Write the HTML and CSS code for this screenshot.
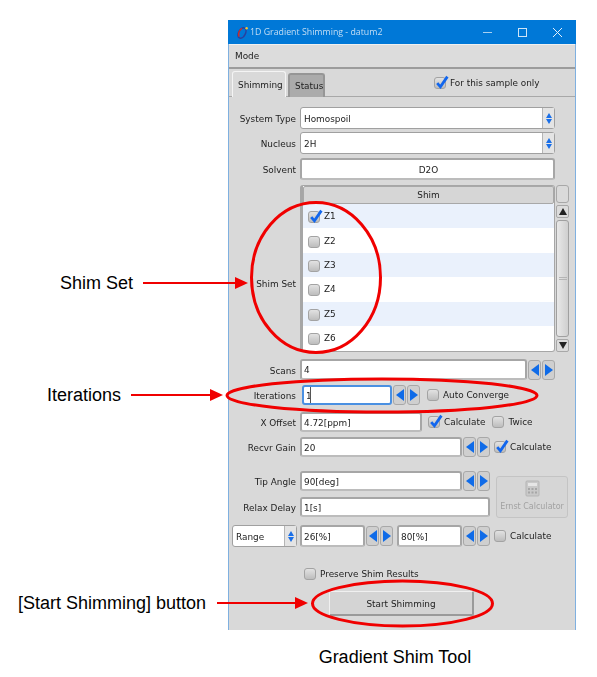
FILE: index.html
```html
<!DOCTYPE html>
<html lang="en">
<head>
<meta charset="UTF-8">
<title>Gradient Shim Tool</title>
<link rel="stylesheet" href="styles.css">
</head>
<body>
<div id="page">
  <div id="window">
    <div class="titlebar">
      <svg class="app-icon" width="13" height="13" viewBox="0 0 13 13">
        <ellipse cx="6" cy="7" rx="3.4" ry="5.6" transform="rotate(28 6 7)" fill="none" stroke="#2a3f9e" stroke-width="1.5"/>
        <path d="M3.2 10.6 C1.8 8 3 4 6 2.4" fill="none" stroke="#c9302c" stroke-width="1.5"/>
        <circle cx="10.6" cy="2.2" r="1.2" fill="#f4c430"/>
      </svg>
      <span class="title-text">1D Gradient Shimming - datum2</span>
      <div class="win-controls">
        <svg width="11" height="11" viewBox="0 0 11 11"><path d="M1 5.5H10" stroke="#a9d0f0" stroke-width="1"/></svg>
        <svg width="11" height="11" viewBox="0 0 11 11"><rect x="1.5" y="1.5" width="8" height="8" fill="none" stroke="#cfe4f6" stroke-width="1"/></svg>
        <svg width="11" height="11" viewBox="0 0 11 11"><path d="M1 1L10 10M10 1L1 10" stroke="#e4f0fa" stroke-width="1"/></svg>
      </div>
    </div>
    <div class="menubar">Mode</div>

    <div class="tabstrip">
      <div class="tab active">Shimming</div>
      <div class="tab">Status</div>
      <label class="check sample-only">
        <span class="box"><svg viewBox="0 0 14 14"><path d="M3 7.5L6 11L12.5 1.5" fill="none" stroke="#1166ee" stroke-width="2.6"/></svg></span>
        For this sample only
      </label>
    </div>

    <div class="form">
      <div class="row row-system">
        <span class="lbl">System Type</span>
        <div class="field select w-full"><span class="val">Homospoil</span><span class="updown"><i class="up"></i><i class="down"></i></span></div>
      </div>
      <div class="row row-nucleus">
        <span class="lbl">Nucleus</span>
        <div class="field select w-full"><span class="val">2H</span><span class="updown"><i class="up"></i><i class="down"></i></span></div>
      </div>
      <div class="row row-solvent">
        <span class="lbl">Solvent</span>
        <div class="field w-full center"><span class="val">D2O</span></div>
      </div>

      <div class="row row-shim">
        <span class="lbl lbl-shim">Shim Set</span>
        <div class="shim-table">
          <div class="shim-list">
            <div class="shim-head">Shim</div>
            <div class="shim-row odd"><span class="box"><svg viewBox="0 0 14 14"><path d="M3 7.5L6 11L12.5 1.5" fill="none" stroke="#1166ee" stroke-width="2.6"/></svg></span>Z1</div>
            <div class="shim-row"><span class="box"></span>Z2</div>
            <div class="shim-row odd"><span class="box"></span>Z3</div>
            <div class="shim-row"><span class="box"></span>Z4</div>
            <div class="shim-row odd"><span class="box"></span>Z5</div>
            <div class="shim-row"><span class="box"></span>Z6</div>
          </div>
          <div class="scrollbar">
            <div class="corner"></div>
            <div class="sb-btn"><i class="tri-up"></i></div>
            <div class="sb-thumb"><span class="grip"></span></div>
            <div class="sb-btn"><i class="tri-down"></i></div>
          </div>
        </div>
      </div>

      <div class="row row-scans">
        <span class="lbl">Scans</span>
        <div class="field w-scans"><span class="val">4</span></div>
        <div class="spin"><span class="spin-btn"><i class="left"></i></span><span class="spin-btn"><i class="right"></i></span></div>
      </div>
      <div class="row row-iter">
        <span class="lbl">Iterations</span>
        <div class="field focused w-iter"><span class="val">1</span><span class="ibeam"></span></div>
        <div class="spin"><span class="spin-btn"><i class="left"></i></span><span class="spin-btn"><i class="right"></i></span></div>
        <label class="check ml-7"><span class="box"></span>Auto Converge</label>
      </div>
      <div class="row row-xoff">
        <span class="lbl">X Offset</span>
        <div class="field w-xoff"><span class="val">4.72[ppm]</span></div>
        <label class="check ml-6"><span class="box"><svg viewBox="0 0 14 14"><path d="M3 7.5L6 11L12.5 1.5" fill="none" stroke="#1166ee" stroke-width="2.6"/></svg></span>Calculate</label>
        <label class="check ml-7"><span class="box"></span>Twice</label>
      </div>
      <div class="row row-gain">
        <span class="lbl">Recvr Gain</span>
        <div class="field w-mid"><span class="val">20</span></div>
        <div class="spin"><span class="spin-btn"><i class="left"></i></span><span class="spin-btn"><i class="right"></i></span></div>
        <label class="check ml-4"><span class="box"><svg viewBox="0 0 14 14"><path d="M3 7.5L6 11L12.5 1.5" fill="none" stroke="#1166ee" stroke-width="2.6"/></svg></span>Calculate</label>
      </div>

      <div class="tip-block">
        <div class="tip-rows">
          <div class="row">
            <span class="lbl">Tip Angle</span>
            <div class="field w-mid"><span class="val">90[deg]</span></div>
            <div class="spin"><span class="spin-btn"><i class="left"></i></span><span class="spin-btn"><i class="right"></i></span></div>
          </div>
          <div class="row row-relax">
            <span class="lbl">Relax Delay</span>
            <div class="field w-relax"><span class="val">1[s]</span></div>
          </div>
        </div>
        <div class="ernst">
          <svg width="15" height="17" viewBox="0 0 15 17">
            <rect x="1" y="1" width="13" height="15" rx="1" fill="#c9c9c9" stroke="#b5b5b5"/>
            <rect x="3" y="3" width="9" height="3" fill="#e6e6e6"/>
            <path d="M3 8h2v2H3zM6.5 8h2v2h-2zM10 8h2v2h-2zM3 11.500h2v2H3zM6.500 11.500h2v2h-2zM10 11.500h2v2h-2z" fill="#a6a6a6"/>
          </svg>
          <span>Ernst Calculator</span>
        </div>
      </div>

      <div class="row row-range">
        <div class="field select range-select"><span class="val">Range</span><span class="updown"><i class="up"></i><i class="down"></i></span></div>
        <div class="field w-small"><span class="val">26[%]</span></div>
        <div class="spin"><span class="spin-btn"><i class="left"></i></span><span class="spin-btn"><i class="right"></i></span></div>
        <div class="field w-small ml-4"><span class="val">80[%]</span></div>
        <div class="spin"><span class="spin-btn"><i class="left"></i></span><span class="spin-btn"><i class="right"></i></span></div>
        <label class="check ml-4"><span class="box"></span>Calculate</label>
      </div>

      <label class="check preserve"><span class="box"></span>Preserve Shim Results</label>
      <div class="start-wrap"><button class="start-btn">Start Shimming</button></div>
    </div>
  </div>

  <p class="caption">Gradient Shim Tool</p>

  <!-- red callouts drawn over the tool -->
  <svg class="callouts" width="597" height="677" viewBox="0 0 597 677">
    <g fill="none" stroke="#f00000" stroke-width="3">
      <ellipse cx="316" cy="277.500" rx="64.500" ry="75"/>
      <ellipse cx="382" cy="395.500" rx="155" ry="16.500"/>
      <ellipse cx="402.500" cy="603.500" rx="90" ry="22.500"/>
    </g>
    <g stroke="#f00000" stroke-width="2">
      <path d="M143 283H236"/>
      <path d="M131 395H211"/>
      <path d="M217 603H296"/>
    </g>
    <g fill="#f00000">
      <path d="M235 277L248 283L235 289Z"/>
      <path d="M210 389L223 395L210 401Z"/>
      <path d="M295 597L308 603L295 609Z"/>
    </g>
  </svg>
  <span class="note note-shim">Shim Set</span>
  <span class="note note-iter">Iterations</span>
  <span class="note note-start">[Start Shimming] button</span>
</div>
</body>
</html>
```
FILE: styles.css
```css
* {
  box-sizing: border-box;
}
body {
  margin: 0;
  background: white;
  font-family: "DejaVu Sans", sans-serif;
}
#page {
  position: relative;
  width: 597px;
  height: 677px;
  overflow: hidden;
  padding-top: 20px;
}
#window {
  width: 348px;
  height: 610px;
  margin-left: 228px;
  background: #d9d9d9;
  border-left: 1px solid #7fb0e0;
  border-right: 1px solid #7fb0e0;
  color: #222;
  font-size: 8.900px;
  filter: blur(0.4px);
}

/* title and menu */
.titlebar {
  height: 24px;
  margin: 0 -1px;
  background: #0078d7;
  display: flex;
  align-items: center;
  padding-left: 8px;
  color: #c4def4;
}
.title-text {
  margin-left: 1px;
  font-family: "Open Sans", sans-serif;
  font-size: 8.800px;
}
.win-controls {
  margin-left: auto;
  margin-right: 13px;
  display: flex;
  gap: 24px;
}
.menubar {
  height: 25px;
  padding: 6px 0 0 6px;
  background: #dcdcdc;
  border-top: 1px solid #f0f0f0;
  border-bottom: 2px solid #9c9c9c;
}

/* tabs */
.tabstrip {
  height: 28px;
  padding: 4px 0 0 3px;
  display: flex;
  align-items: flex-end;
  border-bottom: 1px solid #a8a8a8;
  position: relative;
}
.tab {
  height: 24px;
  padding: 6px 5px 0;
  margin-bottom: -1px;
  background: #ababab;
  border: 2px solid #969696;
  border-bottom: none;
  border-radius: 3px 3px 0 0;
  margin-left: 2px;
  width: 37px;
  white-space: nowrap;
}
.tab.active {
  width: 54px;
  margin-left: 0;
  height: 26px;
  padding-top: 8px;
  background: #d9d9d9;
  border: 1px solid #f4f4f4;
  border-bottom: none;
}
.sample-only {
  position: absolute;
  left: 205px;
  top: 8px;
}

/* form rows */
.form {
  padding-top: 10px;
}
.row {
  display: flex;
  align-items: center;
}
.lbl {
  width: 67px;
  margin-right: 4px;
  padding-top: 2px;
  flex: none;
  text-align: right;
  white-space: nowrap;
}
.lbl-shim {
  margin-top: 28px;
}
.val {
  padding-top: 1px;
}
.row-system { height: 22px; }
.row-nucleus { height: 22px; margin-top: 3px; }
.row-solvent { height: 22px; margin-top: 4px; }
.row-shim { height: 167px; margin-top: 5px; }
.row-scans { height: 21px; margin-top: 7px; }
.row-iter { height: 20px; margin-top: 5px; }
.row-xoff { height: 20px; margin-top: 7px; }
.row-gain { height: 20px; margin-top: 5px; }
.row-relax { height: 20px; margin-top: 6px; }
.row-range { height: 22px; margin-top: 7px; padding-left: 3px; }
.tip-rows .row { height: 20px; }

.field {
  height: 100%;
  flex: none;
  display: flex;
  align-items: center;
  background: white;
  border: 2px solid #a6a6a6;
  border-bottom-color: #bcbcbc;
  border-radius: 3px;
  padding-left: 2px;
  position: relative;
}
.field.select {
  border-width: 1px;
  border-color: #a0a0a0;
  padding-left: 3px;
}
.field.center {
  justify-content: center;
}
.field.focused {
  border-color: #4a90e2;
  margin-left: 2px;
}
.w-full { width: 255px; }
.w-scans { width: 227px; }
.w-iter { width: 90px; }
.w-xoff { width: 122px; }
.w-mid { width: 162px; }
.w-relax { width: 190px; }
.w-small { width: 65px; }
.range-select { width: 65px; margin-right: 3px; }
.ml-4 { margin-left: 4px; }
.ml-6 { margin-left: 6px; }
.ml-7 { margin-left: 7px; }

.ibeam {
  position: absolute;
  left: 6px;
  top: 0;
  bottom: 0;
  width: 1px;
  background: #555;
}
.updown {
  margin-left: auto;
  width: 12px;
  height: 100%;
  border-left: 1px solid #b5b5b5;
  background: #e4e4e4;
  display: flex;
  flex-direction: column;
  align-items: center;
  justify-content: center;
  gap: 1px;
}
.updown i {
  width: 0;
  height: 0;
  border-left: 3px solid transparent;
  border-right: 3px solid transparent;
}
.updown .up { border-bottom: 5px solid #1a6fe8; }
.updown .down { border-top: 5px solid #1a6fe8; }

/* two arrow buttons beside a field */
.spin {
  display: flex;
  flex: none;
  gap: 1px;
  margin-left: 1px;
}
.spin-btn {
  width: 13px;
  height: 20px;
  display: flex;
  align-items: center;
  justify-content: center;
  background: #cfcfcf;
  border: 1px solid #a8a8a8;
  border-radius: 3px;
}
.spin-btn i {
  width: 0;
  height: 0;
  border-top: 6px solid transparent;
  border-bottom: 6px solid transparent;
}
.spin-btn .left { border-right: 8px solid #0f6be8; }
.spin-btn .right { border-left: 8px solid #0f6be8; }

/* checkboxes */
.check {
  display: flex;
  align-items: center;
  flex: none;
  white-space: nowrap;
}
.box {
  width: 12px;
  height: 12px;
  flex: none;
  margin-right: 4px;
  border: 1px solid #a3a3a3;
  border-radius: 3px;
  background: linear-gradient(#e2e2e2, #bdbdbd);
  position: relative;
}
.box svg {
  position: absolute;
  left: -1px;
  top: -3px;
  width: 15px;
  height: 15px;
}

/* shim table */
.shim-table {
  display: flex;
  height: 100%;
}
.shim-list {
  width: 255px;
  height: 167px;
  background: white;
  border: 1px solid #a6a6a6;
  border-left-width: 3px;
  border-radius: 3px;
}
.shim-head {
  height: 18px;
  background: #d6d6d6;
  border: 1px solid #a8a8a8;
  border-radius: 2px;
  text-align: center;
  padding-top: 3px;
}
.shim-row {
  height: 24.400px;
  display: flex;
  align-items: center;
  padding-left: 5px;
}
.shim-row.odd {
  background: #eaf1fc;
}
.shim-row .box {
  margin-right: 4px;
  margin-top: 2px;
}
.scrollbar {
  width: 14px;
  height: 167px;
  display: flex;
  flex-direction: column;
  padding-left: 1px;
}
.corner {
  height: 18px;
  border: 1px solid #a8a8a8;
  border-radius: 3px;
  background: #dadada;
}
.sb-btn {
  height: 13px;
  margin-top: 2px;
  border: 1px solid #a8a8a8;
  border-radius: 2px;
  background: #dcdcdc;
  display: flex;
  align-items: center;
  justify-content: center;
}
.sb-thumb {
  flex: 1;
  margin-top: 2px;
  border: 1px solid #a0a0a0;
  border-radius: 3px;
  background: linear-gradient(to right, #e8e8e8, #cfcfcf);
  display: flex;
  align-items: center;
  justify-content: center;
}
.grip {
  width: 8px;
  height: 3px;
  border-top: 1px solid #b5b5b5;
  border-bottom: 1px solid #b5b5b5;
}
.tri-up, .tri-down {
  width: 0;
  height: 0;
  border-left: 4px solid transparent;
  border-right: 4px solid transparent;
}
.tri-up { border-bottom: 7px solid #222; }
.tri-down { border-top: 7px solid #222; }

/* tip angle block with the disabled calculator */
.tip-block {
  display: flex;
  margin-top: 14px;
}
.ernst {
  width: 72px;
  height: 42px;
  margin: 5px 0 0 6px;
  border: 1px solid #c4c4c4;
  border-radius: 3px;
  background: #d6d6d6;
  color: #a2a2a2;
  font-size: 8px;
  display: flex;
  flex-direction: column;
  align-items: center;
  gap: 5px;
  padding-top: 3px;
  white-space: nowrap;
}

.preserve {
  margin: 18px 0 0 75px;
  height: 17px;
}
.start-wrap {
  margin: 9px 0 0 100px;
}
.start-btn {
  width: 145px;
  height: 25px;
  padding: 1px 0 0;
  background: #d4d4d4;
  border: 1px solid #f0f0f0;
  border-right: 2px solid #9a9a9a;
  border-bottom: 2px solid #9a9a9a;
  border-radius: 2px;
  font: 8.900px "DejaVu Sans", sans-serif;
  color: #222;
}

/* annotations */
.caption {
  margin: 17px 0 0 190px;
  width: 410px;
  text-align: center;
  font: 18px "Liberation Sans", sans-serif;
  color: black;
}
.callouts {
  position: absolute;
  left: 0;
  top: 0;
}
.note {
  position: absolute;
  font: 18px "Liberation Sans", sans-serif;
  color: black;
  white-space: nowrap;
}
.note-shim { left: 60px; top: 273px; }
.note-iter { left: 47px; top: 385px; }
.note-start { left: 18px; top: 593px; }
```
